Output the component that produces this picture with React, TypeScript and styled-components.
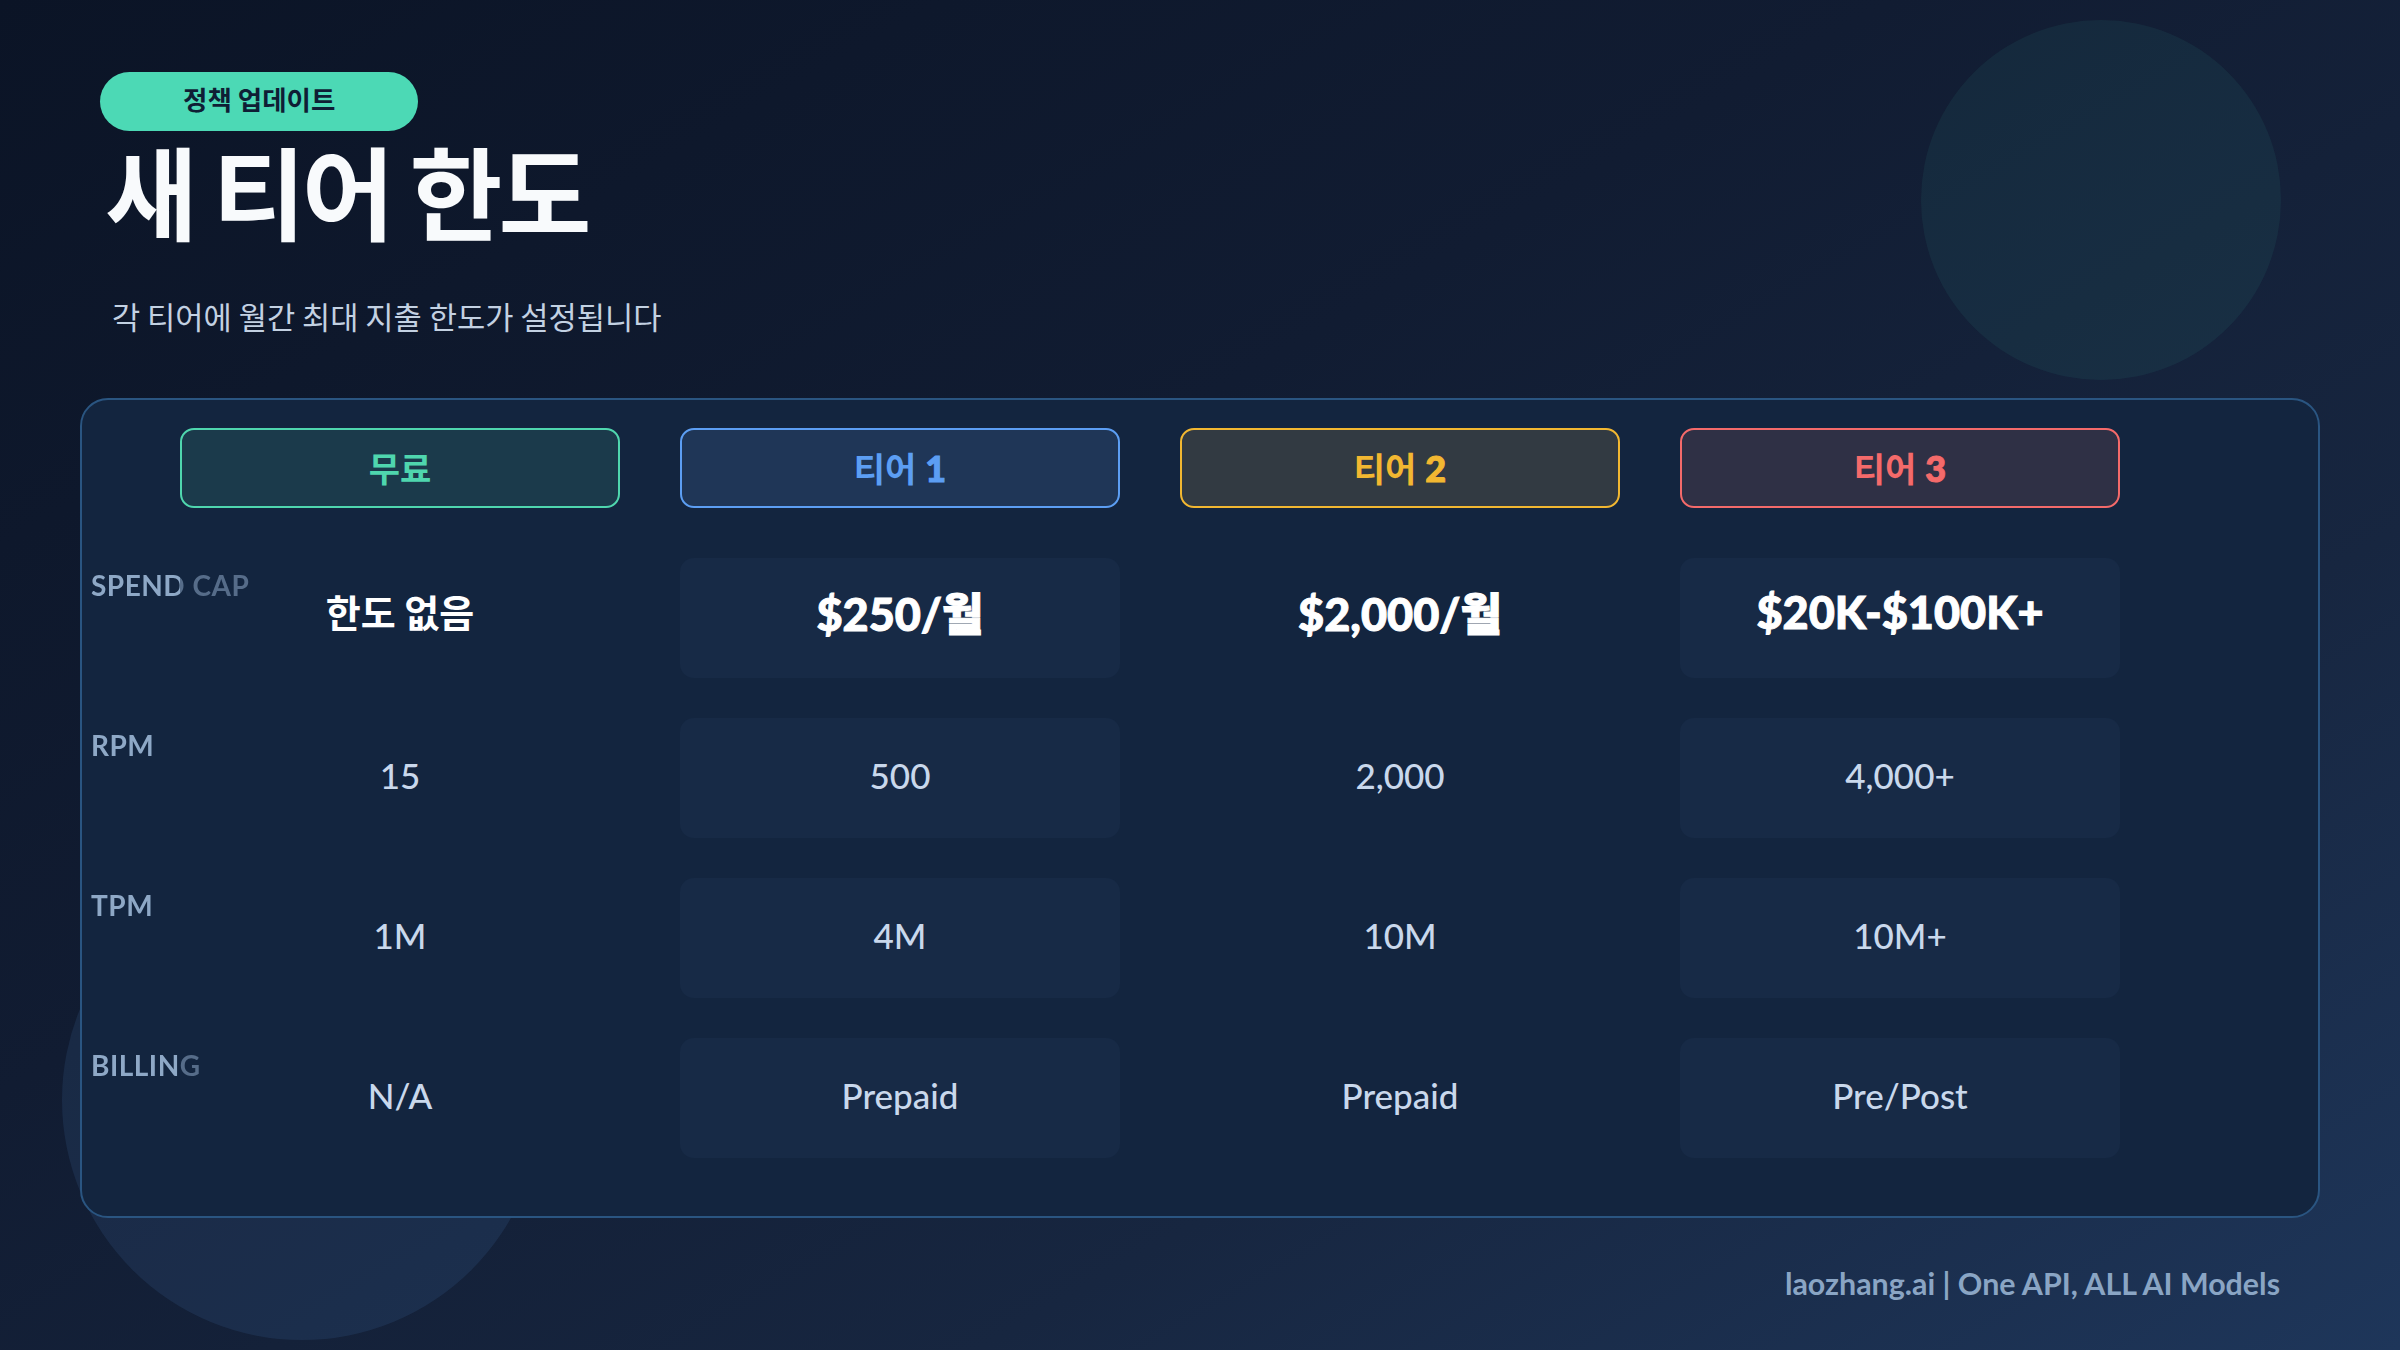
import React from "react";
import styled, { createGlobalStyle } from "styled-components";

const GlobalStyle = createGlobalStyle`
  html, body {
    margin: 0;
    padding: 0;
    background: #0f1a2e;
  }
  * {
    box-sizing: border-box;
  }
`;

const tiers = [
  { name: "무료", num: "", color: "#4fd6ae", tint: "#1b3a4b", dim: true },
  { name: "티어", num: "1", color: "#5c9ef3", tint: "#1f3657", dim: false },
  { name: "티어", num: "2", color: "#f2b731", tint: "#323a42", dim: true },
  { name: "티어", num: "3", color: "#f46a6a", tint: "#2f3045", dim: false },
];

const rows = [
  { label: "SPEND CAP", kind: "cap", values: ["한도 없음", "$250/월", "$2,000/월", "$20K-$100K+"] },
  { label: "RPM", kind: "plain", values: ["15", "500", "2,000", "4,000+"] },
  { label: "TPM", kind: "plain", values: ["1M", "4M", "10M", "10M+"] },
  { label: "BILLING", kind: "plain", values: ["N/A", "Prepaid", "Prepaid", "Pre/Post"] },
];

const Page = styled.div`
  position: relative;
  width: 2400px;
  height: 1350px;
  overflow: hidden;
  padding: 72px 80px 0;
  display: flex;
  flex-direction: column;
  background: linear-gradient(150deg, #0b1426 0%, #111c32 40%, #172640 70%, #1e365a 100%);
  font-family: Lato, "Noto Sans CJK KR", sans-serif;
`;

const Blob = styled.div<{ $x: number; $y: number; $r: number; $color: string }>`
  position: absolute;
  left: ${(p) => p.$x - p.$r}px;
  top: ${(p) => p.$y - p.$r}px;
  width: ${(p) => p.$r * 2}px;
  height: ${(p) => p.$r * 2}px;
  border-radius: 50%;
  background: ${(p) => p.$color};
`;

const Header = styled.header`
  position: relative;
  margin-left: 20px;
  display: flex;
  flex-direction: column;
  align-items: flex-start;
`;

const Badge = styled.div`
  height: 59px;
  padding: 0 83px 4px;
  border-radius: 30px;
  background: #4cd9b5;
  color: #0f1e35;
  display: flex;
  align-items: center;
  font-family: "Noto Sans CJK KR", sans-serif;
  font-weight: 700;
  font-size: 26.5px;
  line-height: 1;
`;

const Title = styled.h1`
  margin: 8px 0 0 5px;
  font-family: "Noto Sans CJK KR", sans-serif;
  font-weight: 700;
  font-size: 101px;
  line-height: 1;
  letter-spacing: -4px;
  color: #f8fafc;
`;

const Subtitle = styled.p`
  margin: 58px 0 0 12px;
  font-family: "Noto Sans CJK KR", sans-serif;
  font-weight: 400;
  font-size: 30.7px;
  line-height: 1.2;
  color: #c3d1e2;
`;

const Panel = styled.section`
  position: relative;
  margin-top: 63px;
  width: 2240px;
  height: 820px;
  border: 2px solid #2a5581;
  border-radius: 28px;
  background: #13253f;
  padding: 28px 0 0 9px;
`;

const Grid = styled.div`
  display: grid;
  grid-template-columns: 29px repeat(4, 440px);
  column-gap: 60px;
`;

const HeadGrid = styled(Grid)`
  grid-template-rows: 80px;
`;

const BodyGrid = styled(Grid)`
  margin-top: 50px;
  grid-auto-rows: 120px;
  row-gap: 40px;
`;

const TierBox = styled.div<{ $color: string; $tint: string }>`
  display: flex;
  align-items: center;
  justify-content: center;
  gap: 9px;
  border: 2px solid ${(p) => p.$color};
  border-radius: 14px;
  background: ${(p) => p.$tint};
  color: ${(p) => p.$color};
  font-family: "Noto Sans CJK KR", sans-serif;
  font-weight: 700;
  font-size: 34px;
`;

const TierNum = styled.span`
  font-family: Lato, sans-serif;
  font-weight: 900;
  font-size: 36px;
  -webkit-text-stroke: 1px currentColor;
`;

const Label = styled.div`
  width: max-content;
  padding-top: 11px;
  white-space: nowrap;
  font-family: Lato, sans-serif;
  font-weight: 700;
  font-size: 28px;
  line-height: 1.2;
  letter-spacing: 0.5px;
  color: #8ea8c6;
  -webkit-mask-image: linear-gradient(90deg, #000 89px, rgba(0, 0, 0, 0.55) 89px);
  mask-image: linear-gradient(90deg, #000 89px, rgba(0, 0, 0, 0.55) 89px);
`;

const Cell = styled.div<{ $highlight: boolean }>`
  display: flex;
  align-items: center;
  justify-content: center;
  padding-bottom: 6px;
  border-radius: 14px;
  background: ${(p) => (p.$highlight ? "#172a46" : "transparent")};
`;

const CapValue = styled.span`
  margin-bottom: 6px;
  font-family: Lato, "Noto Sans CJK KR", sans-serif;
  font-weight: 900;
  font-size: 45px;
  color: #ffffff;
  -webkit-text-stroke: 1px #ffffff;
`;

const KoValue = styled.span`
  margin-bottom: 8px;
  font-family: "Noto Sans CJK KR", sans-serif;
  font-weight: 700;
  font-size: 38px;
  color: #ffffff;
`;

const PlainValue = styled.span`
  font-family: Lato, sans-serif;
  font-weight: 500;
  font-size: 35px;
  color: #c9d8ec;
`;

const Footer = styled.footer`
  position: relative;
  margin-top: 47px;
  padding-right: 40px;
  text-align: right;
  font-family: Lato, sans-serif;
  font-weight: 700;
  font-size: 30.4px;
  line-height: 1.2;
  color: #8aa5c4;
`;

function renderValue(kind: string, value: string) {
  if (kind === "cap") {
    if (/^[가-힣\s]+$/.test(value)) return <KoValue>{value}</KoValue>;
    return <CapValue>{value}</CapValue>;
  }
  return <PlainValue>{value}</PlainValue>;
}

export default function App() {
  return (
    <>
      <GlobalStyle />
      <Page>
        <Blob $x={2101} $y={200} $r={180} $color="rgba(74, 217, 180, 0.07)" />
        <Blob $x={302} $y={1100} $r={240} $color="rgba(96, 165, 250, 0.1)" />

        <Header>
          <Badge>정책 업데이트</Badge>
          <Title>새 티어 한도</Title>
          <Subtitle>각 티어에 월간 최대 지출 한도가 설정됩니다</Subtitle>
        </Header>

        <Panel>
          <HeadGrid>
            <div />
            {tiers.map((t, i) => (
              <TierBox key={i} $color={t.color} $tint={t.tint}>
                {t.name}
                {t.num && <TierNum>{t.num}</TierNum>}
              </TierBox>
            ))}
          </HeadGrid>

          <BodyGrid>
            {rows.map((r) => (
              <React.Fragment key={r.label}>
                <Label>{r.label}</Label>
                {r.values.map((v, i) => (
                  <Cell key={i} $highlight={!tiers[i].dim}>
                    {renderValue(r.kind, v)}
                  </Cell>
                ))}
              </React.Fragment>
            ))}
          </BodyGrid>
        </Panel>

        <Footer>laozhang.ai | One API, ALL AI Models</Footer>
      </Page>
    </>
  );
}
